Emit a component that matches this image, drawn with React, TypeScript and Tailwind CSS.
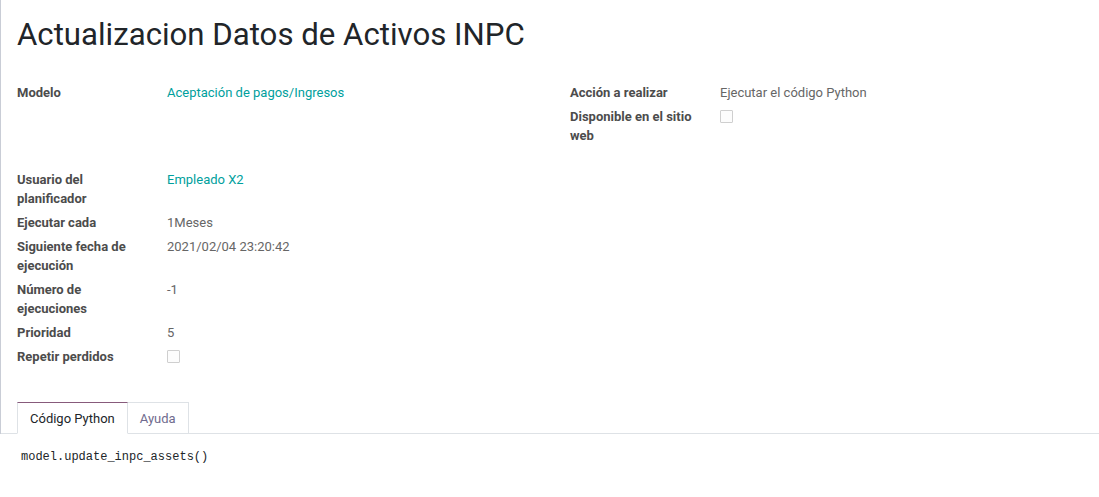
import React from "react";

const Checkbox = () => (
  <span className="inline-block w-[13px] h-[13px] border border-[#cfcfcf] bg-[#fcfcfc] rounded-[1px] mt-[3px]" />
);

type Row = { label: string; value?: React.ReactNode };

const Field = ({ label, value }: Row) => (
  <div className="flex pb-[5px]">
    <div className="w-[150px] shrink-0 pr-5 font-bold text-[#4c4c4c]">{label}</div>
    <div className="flex-1 text-[#666666]">{value}</div>
  </div>
);

export default function App() {
  return (
    <div
      className="w-[1099px] h-[497px] bg-white text-[13px] leading-[19px] overflow-hidden"
      style={{ fontFamily: "Roboto, 'Noto Sans', sans-serif" }}
    >
      <div className="border-l border-[#c9cdd6]">
        <h1 className="pl-4 pt-[16px] text-[31.2px] leading-[38px] font-normal text-[#212529]">
          Actualizacion Datos de Activos INPC
        </h1>

        <div className="pl-4 mt-[29px] grid grid-cols-[553px_1fr]">
          <div>
            <Field
              label="Modelo"
              value={<span className="text-[#00A09D]">Aceptación de pagos/Ingresos</span>}
            />
          </div>
          <div>
            <Field label="Acción a realizar" value="Ejecutar el código Python" />
            <Field label="Disponible en el sitio web" value={<Checkbox />} />
          </div>
        </div>

        <div className="pl-4 mt-[20px] grid grid-cols-[553px_1fr]">
          <div>
            <Field
              label="Usuario del planificador"
              value={<span className="text-[#00A09D]">Empleado X2</span>}
            />
            <Field label="Ejecutar cada" value="1Meses" />
            <Field label="Siguiente fecha de ejecución" value="2021/02/04 23:20:42" />
            <Field label="Número de ejecuciones" value="-1" />
            <Field label="Prioridad" value="5" />
            <Field label="Repetir perdidos" value={<Checkbox />} />
          </div>
          <div />
        </div>

        <ul className="mt-[29px] pl-4 flex border-b border-[#dee2e6]">
          <li className="-mb-px border border-[#dee2e6] border-t-[#875A7B] border-b-white bg-white px-3 pt-[6px] pb-[4px] leading-[20px] text-[#212529]">
            Código Python
          </li>
          <li className="-mb-px border border-l-0 border-[#dee2e6] border-b-transparent px-3 pt-[6px] pb-[4px] leading-[20px] text-[#6f6b8e]">
            Ayuda
          </li>
        </ul>
      </div>

      <div
        className="pl-[21px] pt-[16px] text-[12px] leading-[14px] text-[#212529]"
        style={{ fontFamily: "'Liberation Mono', 'DejaVu Sans Mono', monospace" }}
      >
        model.update_inpc_assets()
      </div>
    </div>
  );
}
